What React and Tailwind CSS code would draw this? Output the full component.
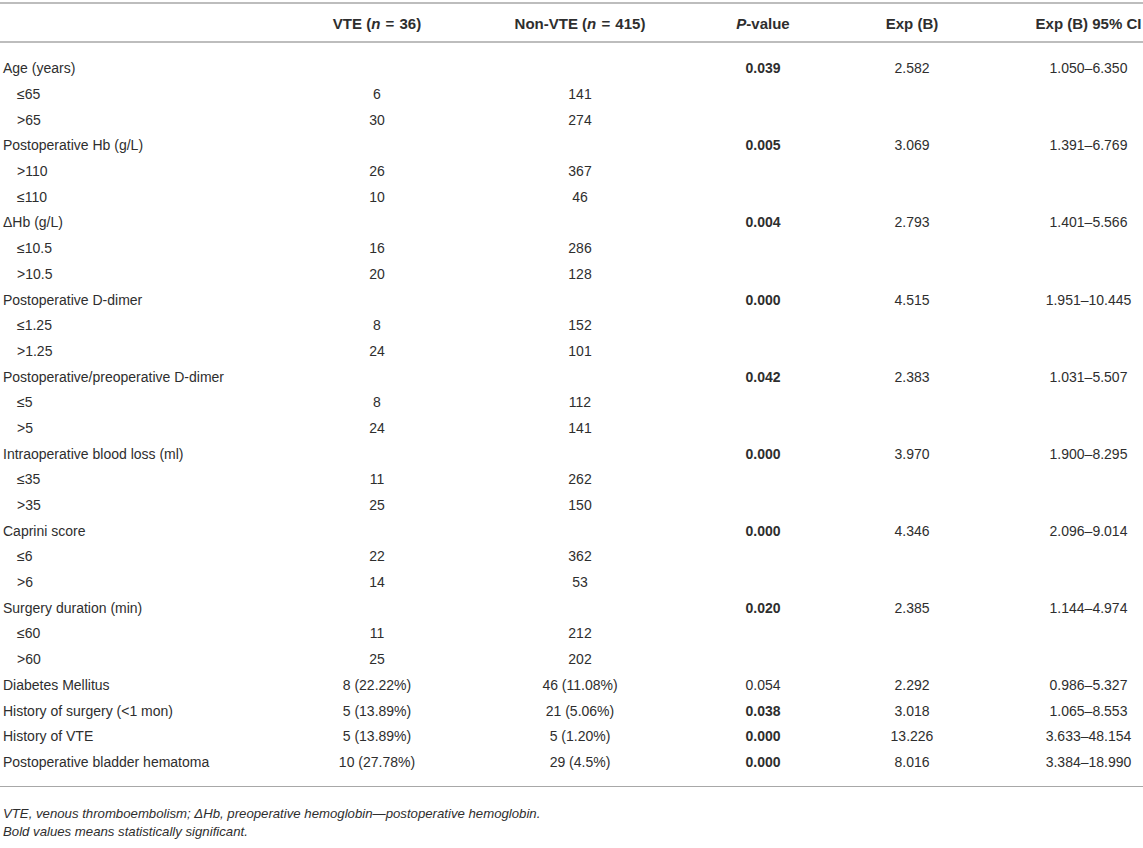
const rows = [
  { label: 'Age (years)', p: '0.039', bold: true, exp: '2.582', ci: '1.050–6.350' },
  { label: '≤65', sub: true, vte: '6', non: '141' },
  { label: '>65', sub: true, vte: '30', non: '274' },
  { label: 'Postoperative Hb (g/L)', p: '0.005', bold: true, exp: '3.069', ci: '1.391–6.769' },
  { label: '>110', sub: true, vte: '26', non: '367' },
  { label: '≤110', sub: true, vte: '10', non: '46' },
  { label: 'ΔHb (g/L)', p: '0.004', bold: true, exp: '2.793', ci: '1.401–5.566' },
  { label: '≤10.5', sub: true, vte: '16', non: '286' },
  { label: '>10.5', sub: true, vte: '20', non: '128' },
  { label: 'Postoperative D-dimer', p: '0.000', bold: true, exp: '4.515', ci: '1.951–10.445' },
  { label: '≤1.25', sub: true, vte: '8', non: '152' },
  { label: '>1.25', sub: true, vte: '24', non: '101' },
  { label: 'Postoperative/preoperative D-dimer', p: '0.042', bold: true, exp: '2.383', ci: '1.031–5.507' },
  { label: '≤5', sub: true, vte: '8', non: '112' },
  { label: '>5', sub: true, vte: '24', non: '141' },
  { label: 'Intraoperative blood loss (ml)', p: '0.000', bold: true, exp: '3.970', ci: '1.900–8.295' },
  { label: '≤35', sub: true, vte: '11', non: '262' },
  { label: '>35', sub: true, vte: '25', non: '150' },
  { label: 'Caprini score', p: '0.000', bold: true, exp: '4.346', ci: '2.096–9.014' },
  { label: '≤6', sub: true, vte: '22', non: '362' },
  { label: '>6', sub: true, vte: '14', non: '53' },
  { label: 'Surgery duration (min)', p: '0.020', bold: true, exp: '2.385', ci: '1.144–4.974' },
  { label: '≤60', sub: true, vte: '11', non: '212' },
  { label: '>60', sub: true, vte: '25', non: '202' },
  { label: 'Diabetes Mellitus', vte: '8 (22.22%)', non: '46 (11.08%)', p: '0.054', exp: '2.292', ci: '0.986–5.327' },
  { label: 'History of surgery (<1 mon)', vte: '5 (13.89%)', non: '21 (5.06%)', p: '0.038', bold: true, exp: '3.018', ci: '1.065–8.553' },
  { label: 'History of VTE', vte: '5 (13.89%)', non: '5 (1.20%)', p: '0.000', bold: true, exp: '13.226', ci: '3.633–48.154' },
  { label: 'Postoperative bladder hematoma', vte: '10 (27.78%)', non: '29 (4.5%)', p: '0.000', bold: true, exp: '8.016', ci: '3.384–18.990' },
];

const cols = 'grid grid-cols-[280px_194px_212px_154px_144px_159px]';

export default function App() {
  return (
    <div className="w-[1143px] h-[848px] bg-white text-[#2e2e2e] text-[14px]" style={{ fontFamily: '"Liberation Sans", Arial, sans-serif' }}>
      <div className="pt-[2px]">
        {/* header */}
        <div className={`${cols} h-[41px] pt-[4px] items-center border-t-2 border-b-2 border-[#bdbdbd] font-bold text-[15px]`}>
          <div />
          <div className="text-center whitespace-nowrap">VTE (<i>n</i> <span className="mx-[1px]">=</span> 36)</div>
          <div className="text-center whitespace-nowrap">Non-VTE (<i>n</i> <span className="mx-[1px]">=</span> 415)</div>
          <div className="text-center"><i>P</i>-value</div>
          <div className="text-center">Exp (B)</div>
          <div className="text-center pl-[50px] whitespace-nowrap">Exp (B) 95% CI</div>
        </div>

        {/* body */}
        <div className="pt-[13px] pb-[11px] border-b border-[#a8a8a8]">
          {rows.map((r, i) => (
            <div key={i} className={`${cols} h-[25.7px] items-center`}>
              <div className={r.sub ? 'pl-[17px]' : 'pl-[3px]'}>{r.label}</div>
              <div className="text-center">{r.vte}</div>
              <div className="text-center">{r.non}</div>
              <div className={r.bold ? 'text-center font-bold' : 'text-center'}>{r.p}</div>
              <div className="text-center">{r.exp}</div>
              <div className="text-center pl-[50px] whitespace-nowrap">{r.ci}</div>
            </div>
          ))}
        </div>

        {/* footnote */}
        <div className="pt-[18px] pl-[3px] italic text-[13.2px] leading-[18px]">
          <div>VTE, venous thromboembolism; ΔHb, preoperative hemoglobin—postoperative hemoglobin.</div>
          <div>Bold values means statistically significant.</div>
        </div>
      </div>
    </div>
  );
}
